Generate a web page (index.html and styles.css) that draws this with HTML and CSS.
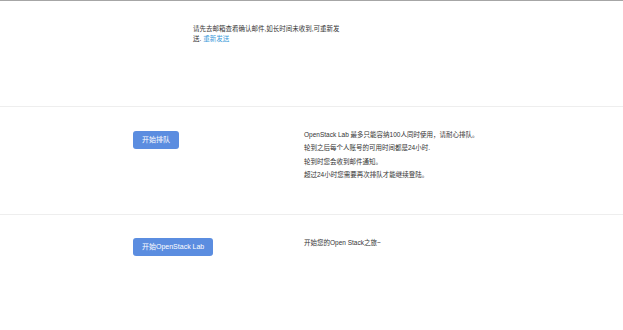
FILE: index.html
```html
<!DOCTYPE html>
<html lang="zh-CN">
<head>
<meta charset="utf-8">
<title>OpenStack Lab</title>
<link rel="stylesheet" href="styles.css">
</head>
<body>
<div class="topbar"></div>
<section class="notice">
  <p class="notice-text"><span>请先去邮箱查看确认邮件,如长时间未收到,可重新发</span><br><span>送.</span> <a href="#" class="link">重新发送</a></p>
</section>
<section class="row">
  <div class="col-left"><button class="btn">开始排队</button></div>
  <div class="col-right">
    <p class="line">OpenStack Lab 最多只能容纳100人同时使用，请耐心排队。</p>
    <p class="line">轮到之后每个人账号的可用时间都是24小时.</p>
    <p class="line">轮到时您会收到邮件通知。</p>
    <p class="line">超过24小时您需要再次排队才能继续登陆。</p>
  </div>
</section>
<section class="row row-last">
  <div class="col-left col-left-last"><button class="btn">开始OpenStack Lab</button></div>
  <div class="col-right">
    <p class="line">开始您的Open Stack之旅~</p>
  </div>
</section>
</body>
</html>
```
FILE: styles.css
```css
html, body {
  margin: 0;
  padding: 0;
  background: #fff;
}
body {
  font-family: "Liberation Sans", "Noto Sans CJK SC", sans-serif;
  color: #333;
  width: 623px;
  height: 330px;
  overflow: hidden;
}
.topbar {
  height: 1px;
  background: #a6a6a6;
}
.notice {
  height: 105px;
  padding-left: 193px;
  box-sizing: border-box;
  padding-top: 23px;
}
.notice-text {
  margin: 0;
  font-size: 6.5px;
  line-height: 10px;
  white-space: nowrap;
}
.link {
  color: #3a9ad9;
  text-decoration: none;
}
.row {
  display: grid;
  grid-template-columns: 171px 1fr;
  padding-left: 133px;
  border-top: 1px solid #eeeeee;
  height: 107px;
  box-sizing: content-box;
}
.row-last {
  height: 115px;
}
.col-left {
  padding-top: 24px;
}
.col-left-last {
  padding-top: 23px;
}
.col-right {
  padding-top: 21px;
}
.line {
  margin: 0;
  font-size: 6.5px;
  line-height: 13.3px;
  white-space: nowrap;
}
.btn {
  display: block;
  height: 18px;
  padding: 0 9px;
  border: 0;
  border-radius: 3px;
  background: #5b8de0;
  color: #fff;
  font-family: "Liberation Sans", "Noto Sans CJK SC", sans-serif;
  font-size: 7px;
  line-height: 18px;
  cursor: pointer;
}
```
